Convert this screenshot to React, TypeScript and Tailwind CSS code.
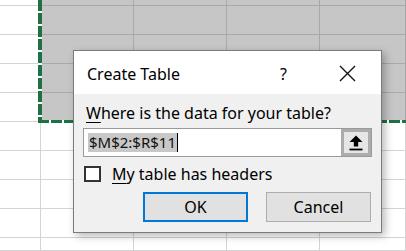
import { useMemo } from "react";

const colW = [41, 93, 93, 93, 86];
const rowH = [6, 29, 29, 29, 29, 29, 29, 29, 29, 13];

// rows 0..4 and cols 1..4 are inside the copied range
const inRange = (r: number, c: number) => r <= 4 && c >= 1;

const Sheet = () => {
  const rows = useMemo(() => rowH.map((h, r) => ({ h, r })), []);
  return (
    <div className="flex flex-col">
      {rows.map(({ h, r }) => (
        <div key={r} className="flex" style={{ height: h }}>
          {colW.map((w, c) => (
            <div
              key={c}
              style={{ width: w }}
              className={
                inRange(r, c)
                  ? "shrink-0 bg-[#c6c6c6] border-r border-b border-[#a9a9a9]"
                  : "shrink-0 bg-white border-r border-b border-[#d4d4d4]"
              }
            />
          ))}
        </div>
      ))}
    </div>
  );
};

const UploadIcon = () => (
  <svg width="14" height="16" viewBox="0 0 14 16">
    <path d="M7 0.5 L13.5 7 L9.2 7 L9.2 11.5 L4.8 11.5 L4.8 7 L0.5 7 Z" fill="#000" />
    <rect x="0.5" y="13.6" width="13" height="1.8" fill="#000" />
  </svg>
);

const CreateTableDialog = () => (
  <div className="absolute left-[73px] top-[50px] w-[309px] h-[183px] border border-[#7b7b7b] bg-[#f0f0f0] shadow-[3px_3px_8px_rgba(0,0,0,0.28)] flex flex-col">
    <div className="h-[43px] bg-white flex items-center pl-[13px] shrink-0">
      <span className="text-[16px] text-black leading-none mt-[2px]">Create Table</span>
      <span className="ml-auto text-[16px] text-black leading-none mt-[2px] mr-[52px]">?</span>
      <svg width="17" height="17" viewBox="0 0 17 17" className="mr-[25px] mt-[1px]">
        <path d="M1 1 L16 16 M16 1 L1 16" stroke="#111" strokeWidth="1.4" />
      </svg>
    </div>
    <div className="flex flex-col px-[9px] pt-[9px]">
      <div className="text-[16px] leading-[20px] text-black pl-[3px]">
        <span className="underline underline-offset-[3px]">W</span>here is the data for your table?
      </div>
      <div className="flex h-[29px] mt-[5px] border border-[#9a9a9a] w-[289px]">
        <div className="flex-1 bg-white flex items-center pl-[4px]">
          <span className="bg-[#c8c8c8] text-[15px] leading-[19px] text-[#111] px-[1px]">$M$2:$R$11</span>
          <span className="w-[1px] h-[19px] bg-black" />
        </div>
        <div className="w-[30px] bg-[#e6e6e6] border-[3px] border-[#acacac] flex items-center justify-center">
          <UploadIcon />
        </div>
      </div>
      <div className="flex items-center mt-[9px] h-[16px]">
        <div className="w-[17px] h-[16px] border-2 border-[#333] bg-white ml-[1px]" />
        <span className="ml-[11px] text-[16px] text-black leading-none">
          <span className="underline underline-offset-[3px]">M</span>y table has headers
        </span>
      </div>
      <div className="flex justify-end gap-[18px] mt-[10px] pr-[1px]">
        <button className="w-[105px] h-[30px] bg-[#e1e1e1] border-2 border-[#0078d7] text-[16px] text-black">OK</button>
        <button className="w-[105px] h-[30px] bg-[#e1e1e1] border border-[#adadad] text-[16px] text-black">Cancel</button>
      </div>
    </div>
  </div>
);

export default function App() {
  return (
    <div className="relative w-[406px] h-[251px] overflow-hidden bg-white font-['Noto_Sans',sans-serif]">
      <Sheet />
      {/* marching ants around the copied range */}
      <div className="absolute left-[38px] top-0 w-[4px] h-[123px] bg-[repeating-linear-gradient(to_bottom,#1e7145_0px,#1e7145_11px,#fff_11px,#fff_13px)]" />
      <div className="absolute left-[38px] top-[120px] w-[368px] h-[3px] bg-[repeating-linear-gradient(to_right,#1e7145_0px,#1e7145_11px,#fff_11px,#fff_13px)]" />
      <CreateTableDialog />
    </div>
  );
}
